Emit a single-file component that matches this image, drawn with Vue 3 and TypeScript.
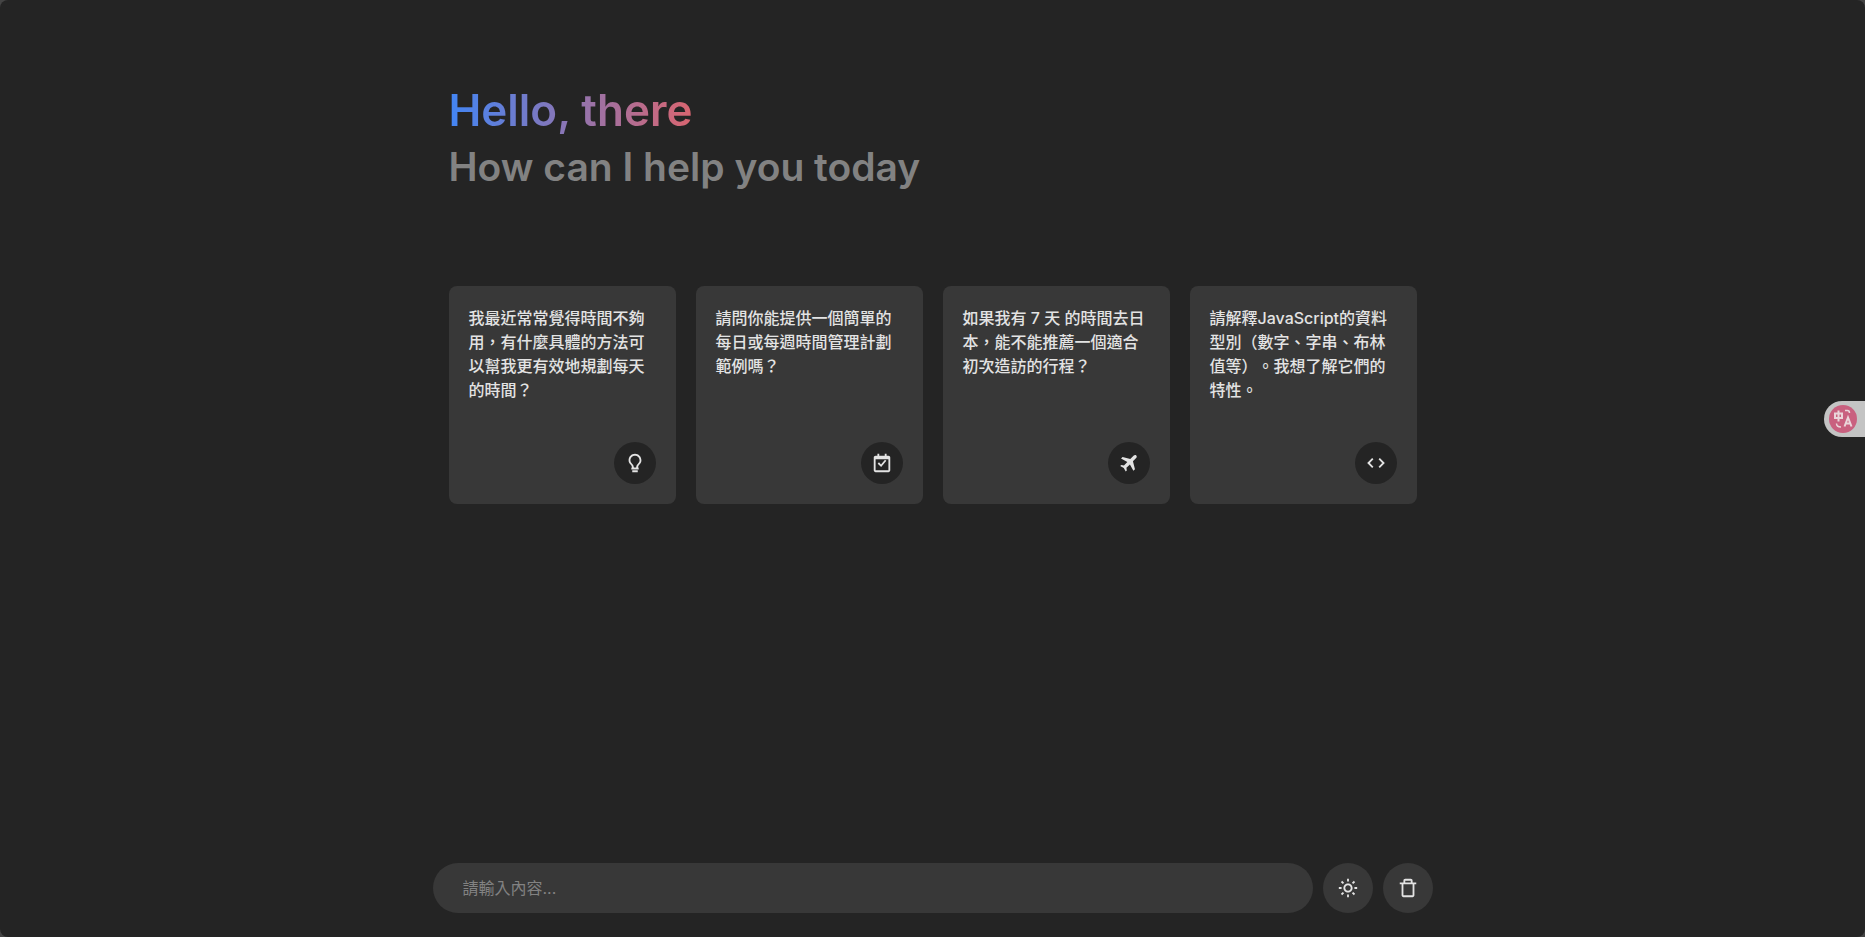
<script setup lang="ts">
import { ref } from 'vue'

type IconName = 'bulb' | 'calendar' | 'plane' | 'code'

interface Suggestion {
  text: string
  icon: IconName
}

const suggestions: Suggestion[] = [
  { text: '我最近常常覺得時間不夠用，有什麼具體的方法可以幫我更有效地規劃每天的時間？', icon: 'bulb' },
  { text: '請問你能提供一個簡單的每日或每週時間管理計劃範例嗎？', icon: 'calendar' },
  { text: '如果我有 7 天 的時間去日本，能不能推薦一個適合初次造訪的行程？', icon: 'plane' },
  { text: '請解釋JavaScript的資料型別（數字、字串、布林值等）。我想了解它們的特性。', icon: 'code' },
]

const message = ref('')
</script>

<template>
  <div class="page">
    <main class="content">
      <header class="greeting">
        <h1 class="title">Hello, there</h1>
        <p class="subtitle">How can I help you today</p>
      </header>

      <ul class="suggestions">
        <li v-for="item in suggestions" :key="item.icon" class="suggestion">
          <button type="button" class="card" @click="message = item.text">
            <span class="card-text">{{ item.text }}</span>
            <span class="card-icon">
              <svg v-if="item.icon === 'bulb'" class="icon" viewBox="0 0 24 24" aria-hidden="true">
                <path d="M9 20h6v2H9zm7.906-6.288C17.936 12.506 19 11.259 19 9c0-3.859-3.141-7-7-7S5 5.141 5 9c0 2.285 1.067 3.528 2.101 4.73.358.418.729.851 1.084 1.349.144.206.38.996.591 1.921H8v2h8v-2h-.774c.213-.927.45-1.719.593-1.925.352-.503.726-.94 1.087-1.363zm-2.724.213c-.434.617-.796 2.075-1.006 3.075h-2.351c-.209-1.002-.572-2.463-1.011-3.08a20.502 20.502 0 0 0-1.196-1.492C7.644 11.294 7 10.544 7 9c0-2.757 2.243-5 5-5s5 2.243 5 5c0 1.521-.643 2.274-1.615 3.413-.373.438-.796.933-1.203 1.512z" />
              </svg>
              <svg v-else-if="item.icon === 'calendar'" class="icon" viewBox="0 0 24 24" aria-hidden="true">
                <path d="m10.933 13.519-2.226-2.226-1.414 1.414 3.774 3.774 5.702-6.84-1.538-1.282z" />
                <path d="M19 4h-2V2h-2v2H9V2H7v2H5c-1.103 0-2 .897-2 2v14c0 1.103.897 2 2 2h14c1.103 0 2-.897 2-2V6c0-1.103-.897-2-2-2zm.002 16H5V8h14l.002 12z" />
              </svg>
              <svg v-else-if="item.icon === 'plane'" class="icon" viewBox="0 0 24 24" aria-hidden="true">
                <path d="M19.900 3.700c-.8-.7-1.900-.6-2.700.1L13.400 7.500 5 5.400 3.300 7.100l6.900 3.700-3.700 3.900-2.900-.5L2.400 15.400l3.900 2.100 2.100 3.900 1.200-1.200-.4-3 3.800-3.700 3.800 6.900 1.700-1.700L16.300 10.200l3.500-3.700c.8-.8.9-2 .1-2.800z" />
              </svg>
              <svg v-else class="icon" viewBox="0 0 24 24" aria-hidden="true">
                <path class="stroke" d="M8.500 7.300 3.800 12l4.700 4.700M15.500 7.300l4.700 4.700-4.700 4.700" />
              </svg>
            </span>
          </button>
        </li>
      </ul>
    </main>

    <form class="composer" @submit.prevent>
      <input v-model="message" class="field" type="text" placeholder="請輸入內容..." aria-label="請輸入內容" />
      <button type="button" class="round" aria-label="切換主題">
        <svg class="icon" viewBox="0 0 24 24" aria-hidden="true">
          <path d="M6.993 12c0 2.761 2.246 5.007 5.007 5.007s5.007-2.246 5.007-5.007S14.761 6.993 12 6.993 6.993 9.239 6.993 12zM12 8.993c1.658 0 3.007 1.349 3.007 3.007S13.658 15.007 12 15.007 8.993 13.658 8.993 12 10.342 8.993 12 8.993zM10.998 19h2v3h-2zm0-17h2v3h-2zm-9 9h3v2h-3zm17 0h3v2h-3zM4.219 18.363l2.12-2.122 1.415 1.414-2.12 2.122zM16.24 6.344l2.122-2.122 1.414 1.414-2.122 2.122zM6.342 7.759 4.22 5.637l1.415-1.414 2.12 2.122zm13.434 10.605-1.414 1.414-2.122-2.122 1.414-1.414z" />
        </svg>
      </button>
      <button type="button" class="round" aria-label="刪除對話">
        <svg class="icon" viewBox="0 0 24 24" aria-hidden="true">
          <path d="M15 2H9c-1.103 0-2 .897-2 2v2H3v2h2v12c0 1.103.897 2 2 2h10c1.103 0 2-.897 2-2V8h2V6h-4V4c0-1.103-.897-2-2-2zM9 4h6v2H9V4zm8 16H7V8h10v12z" />
        </svg>
      </button>
    </form>

    <button type="button" class="translate" aria-label="翻譯">
      <svg class="translate-icon" viewBox="0 0 28 28" aria-hidden="true">
        <circle cx="14" cy="14" r="14" fill="#c9607f" />
        <g fill="none" stroke="#ead5da" stroke-width="2">
          <path d="M6 8.500h7v4.500H6zM9.500 5.500v11" />
          <path d="M15.500 21.500 19 12.500l3.500 9M16.700 18.500h4.600" />
          <path d="M16 5.500h2.500q2 0 2 2.500M7.500 18.500q0 3.500 4.500 3.500" stroke-width="1.500" />
        </g>
      </svg>
    </button>
  </div>
</template>

<style>
body {
  margin: 0;
  background: #444444;
}
</style>

<style scoped>
.page {
  display: flex;
  flex-direction: column;
  min-height: 100vh;
  box-sizing: border-box;
  padding: 84px 0 24px;
  border-radius: 8px;
  background: #242424;
  color: #e3e3e3;
  font-family: Inter, "Noto Sans CJK TC", sans-serif;
  font-size: 16px;
  line-height: 24px;
}

.content,
.composer {
  box-sizing: border-box;
  width: 100%;
  max-width: 1000px;
  margin: 0 auto;
}

.content {
  flex: 1;
  padding: 0 16px;
}

.title,
.subtitle {
  margin: 0;
  font-weight: 600;
}

.title {
  width: fit-content;
  background: linear-gradient(to right, #4285f4, #d96570);
  background-clip: text;
  color: transparent;
  font-size: 44px;
  line-height: 52px;
}

.subtitle {
  color: #828282;
  font-size: 39px;
  line-height: 62px;
}

.suggestions {
  display: grid;
  grid-template-columns: repeat(4, 1fr);
  gap: 20px;
  margin: 88px 0 0;
  padding: 0;
  list-style: none;
}

.suggestion {
  display: flex;
}

.card {
  display: flex;
  flex: 1;
  flex-direction: column;
  justify-content: space-between;
  gap: 40px;
  padding: 20px;
  border: 0;
  border-radius: 8px;
  background: #383838;
  color: inherit;
  font: inherit;
  font-weight: 500;
  text-align: left;
  text-spacing-trim: space-all;
  cursor: pointer;
}

.card-icon {
  display: flex;
  align-items: center;
  justify-content: center;
  align-self: flex-end;
  width: 42px;
  height: 42px;
  border-radius: 50%;
  background: #242424;
}

.icon {
  width: 22px;
  height: 22px;
  fill: currentColor;
}

.stroke {
  fill: none;
  stroke: currentColor;
  stroke-width: 2;
}

.composer {
  display: flex;
  gap: 10px;
}

.field {
  flex: 1;
  box-sizing: border-box;
  height: 50px;
  min-width: 0;
  padding: 0 30px;
  border: 0;
  border-radius: 25px;
  outline: 0;
  background: #383838;
  color: inherit;
  font: inherit;
}

.field::placeholder {
  color: #828282;
  opacity: 1;
}

.round {
  display: flex;
  align-items: center;
  justify-content: center;
  width: 50px;
  height: 50px;
  padding: 0;
  border: 0;
  border-radius: 50%;
  background: #383838;
  color: inherit;
  cursor: pointer;
}

.translate {
  position: fixed;
  top: 401px;
  right: 0;
  display: flex;
  align-items: center;
  width: 41px;
  height: 36px;
  padding: 0 0 0 5px;
  border: 0;
  border-radius: 18px 0 0 18px;
  background: #c4c4c4;
  cursor: pointer;
}

.translate-icon {
  width: 28px;
  height: 28px;
}
</style>
